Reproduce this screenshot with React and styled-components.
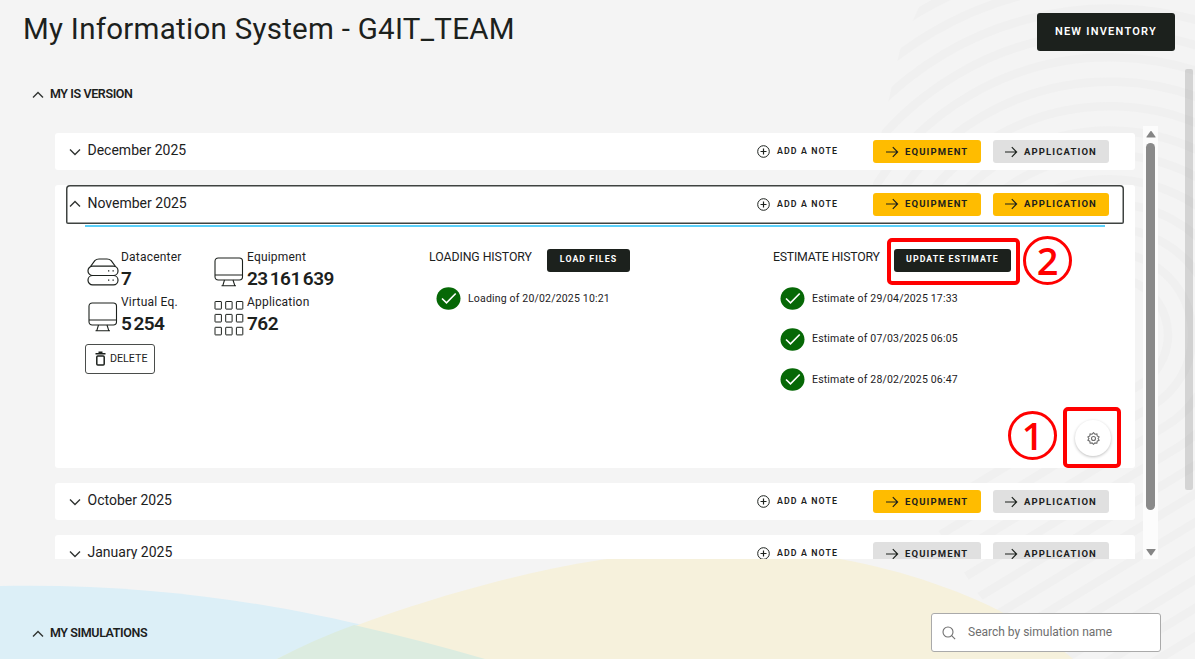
import React from "react";
import styled, { createGlobalStyle, css } from "styled-components";

const INK = "#1c211d";
const YELLOW = "#ffbc00";

const GlobalStyle = createGlobalStyle`
  * { box-sizing: border-box; }
  body { margin: 0; background: #f4f4f4; font-family: Roboto, "Open Sans", sans-serif; color: ${INK}; }
  button, input { font-family: inherit; color: inherit; }
`;

const Page = styled.div`
  position: relative;
  width: 1195px;
  height: 659px;
  overflow: hidden;
  isolation: isolate;
`;

const Backdrop = styled.svg`
  position: absolute;
  inset: 0;
  z-index: -1;
`;

const Header = styled.header`
  display: flex;
  justify-content: space-between;
  height: 69px;
  padding: 13px 20px 0 23px;
`;

const Title = styled.h1`
  margin: 0;
  font-size: 29.5px;
  line-height: 33px;
  font-weight: 400;
  letter-spacing: 0.27px;
  white-space: nowrap;
`;

const DarkButton = styled.button`
  display: flex;
  align-items: center;
  justify-content: center;
  flex: none;
  border: 0;
  padding: 0 0 ${(p) => (p.$large ? 2 : 1.5)}px;
  border-radius: 3px;
  background: ${INK};
  color: #fff;
  font-weight: ${(p) => (p.$large ? 600 : 700)};
  white-space: nowrap;
  width: ${(p) => p.$width}px;
  height: ${(p) => (p.$large ? 38 : 23)}px;
  font-size: ${(p) => (p.$large ? 11 : 8.8)}px;
  letter-spacing: ${(p) => (p.$large ? 1.25 : 1.05)}px;
`;

const Body = styled.div`
  display: flex;
  justify-content: space-between;
  height: 421px;
`;

const Sections = styled.main`
  width: 1160px;
`;

const PageScroll = styled.div`
  width: 8px;
  height: 421px;
  margin-right: 2px;
  border-radius: 2px;
  background: rgba(0, 0, 0, 0.13);
`;

const SectionToggle = styled.div`
  display: flex;
  align-items: center;
  gap: 6px;
  height: 20px;
  margin: ${(p) => p.$top}px 0 0 32px;
  font-size: 12.5px;
  font-weight: 600;
  letter-spacing: -0.4px;
  white-space: nowrap;
  svg { margin-top: 3px; }
`;

const ListFrame = styled.div`
  display: flex;
  justify-content: space-between;
  height: 433px;
  margin: 23px 2px 0 55px;
  overflow: hidden;
`;

const List = styled.div`
  display: flex;
  flex-direction: column;
  gap: 15px;
  width: 1080px;
  padding-top: 7px;
`;

const Panel = styled.section`
  flex: none;
  height: ${(p) => (p.$open ? 283 : 37)}px;
  padding: 0 11px;
  border-radius: 3px;
  background: #fff;
`;

const PanelHeader = styled.div`
  display: flex;
  align-items: center;
  height: ${(p) => (p.$open ? 38.5 : 37)}px;
  padding: 0 15px 0 3px;
  border-radius: 4px 4px 2px 2px;
  ${(p) => p.$open && css`box-shadow: inset 0 0 0 1.5px #3f4341;`}
`;

const Month = styled.span`
  flex: 1;
  margin: -3px 0 0 6.5px;
  font-size: 14px;
  letter-spacing: 0;
`;

const AddNote = styled.button`
  display: flex;
  align-items: center;
  gap: 7px;
  width: 81px;
  margin-right: 35px;
  padding: 0;
  border: 0;
  background: none;
  font-size: 8.8px;
  font-weight: 600;
  letter-spacing: 1.1px;
  white-space: nowrap;
  svg { flex: none; }
  span { margin-top: -1px; }
`;

const LinkButton = styled.button`
  display: flex;
  align-items: center;
  gap: 6px;
  width: ${(p) => p.$width}px;
  height: 22.5px;
  margin-left: ${(p) => p.$gap || 0}px;
  padding: 0 0 0 ${(p) => p.$pad}px;
  border: 0;
  border-radius: 3px;
  background: ${(p) => (p.$active ? YELLOW : "#e0e0e0")};
  font-size: 9.5px;
  font-weight: 700;
  letter-spacing: 1.13px;
  white-space: nowrap;
  svg { flex: none; }
  span { margin-top: -1px; }
`;

const Details = styled.div`
  display: grid;
  grid-template-columns: 344px 344px 1fr;
  height: 243px;
  margin: 1.5px 19px 0;
  border-top: 2px solid #5ad0fa;
`;

const Inventory = styled.div`
  padding-top: 22px;
`;

const Stats = styled.div`
  display: grid;
  grid-template-columns: 126px 1fr;
  grid-auto-rows: 45px;
`;

const Stat = styled.div`
  display: flex;
  gap: 2px;
  svg { flex: none; margin: 7px 0 0 2px; }
`;

const StatText = styled.div`
  display: flex;
  flex-direction: column;
  white-space: nowrap;
  font-size: 12px;
  line-height: 16px;
  letter-spacing: 0.2px;
`;

const Figure = styled.strong`
  margin-top: 3px;
  font-size: 19px;
  line-height: 22px;
  font-weight: 600;
  letter-spacing: -0.5px;
  word-spacing: -2.2px;
`;

const DeleteButton = styled.button`
  display: flex;
  align-items: center;
  gap: 4px;
  width: 70px;
  height: 30px;
  margin-top: 5px;
  padding: 0 0 1px 9px;
  border: 1.5px solid #4a4d4b;
  border-radius: 3px;
  background: #fff;
  font-size: 10.7px;
`;

const History = styled.div`
  padding-top: 21.5px;
`;

const HistoryHead = styled.div`
  display: flex;
  height: 24px;
  font-size: 12.3px;
  line-height: 17px;
  white-space: nowrap;
`;

const HistoryTitle = styled.span`
  width: ${(p) => p.$width}px;
  letter-spacing: ${(p) => p.$tracking}px;
`;

const Entries = styled.ul`
  display: flex;
  flex-direction: column;
  gap: 17.5px;
  margin: 14.5px 0 0 6.5px;
  padding: 0;
  list-style: none;
`;

const Entry = styled.li`
  display: flex;
  align-items: center;
  gap: 7.5px;
  height: 23px;
  font-size: 10.5px;
  letter-spacing: 0.18px;
  white-space: nowrap;
  span { margin-top: -1px; }
`;

const InnerScroll = styled.div`
  display: flex;
  flex-direction: column;
  align-items: center;
  justify-content: space-between;
  width: 15px;
  padding: 4px 0 3px;
  background: #fcfcfc;
`;

const Thumb = styled.div`
  width: 9px;
  height: 367px;
  margin: 5px 0 auto;
  border-radius: 5px;
  background: #8a8a8a;
`;

const Footer = styled.div`
  display: flex;
  justify-content: space-between;
  margin-top: 123px;
  padding-right: 34px;
`;

const Search = styled.label`
  display: flex;
  align-items: center;
  gap: 12px;
  width: 230px;
  height: 39px;
  padding: 0 10px;
  border: 1.5px solid #aaa;
  border-radius: 3px;
  background: #fff;
`;

const SearchInput = styled.input`
  flex: 1;
  min-width: 0;
  padding: 0 0 1px;
  border: 0;
  outline: 0;
  background: none;
  font-size: 12px;
  letter-spacing: 0;
  &::placeholder { color: #6e6e6e; opacity: 1; }
`;

const SettingsButton = styled.button`
  position: absolute;
  left: 1075px;
  top: 420px;
  display: grid;
  place-items: center;
  width: 36px;
  height: 36px;
  padding: 0;
  border: 0;
  border-radius: 50%;
  background: #fff;
  box-shadow: 0 1px 3px rgba(0, 0, 0, 0.25);
`;

const Highlight = styled.div`
  position: absolute;
  left: ${(p) => p.$x}px;
  top: ${(p) => p.$y}px;
  width: ${(p) => p.$w}px;
  height: ${(p) => p.$h}px;
  border: 4px solid #f00;
  border-radius: 5px;
`;

const Step = styled.div`
  position: absolute;
  left: ${(p) => p.$x}px;
  top: ${(p) => p.$y}px;
  display: grid;
  place-items: center;
  width: 49px;
  height: 49px;
  border: 3px solid #f00;
  border-radius: 50%;
  color: #f00;
  font: 600 38px/43px "Open Sans", "Noto Sans", sans-serif;
`;

const Chevron = ({ up }) => (
  <svg width="12" height="8" viewBox="0 0 12 8" fill="none" stroke="#303432" strokeWidth="1.4">
    <path d={up ? "M1 6.5 6 1.5 11 6.5" : "M1 1.5 6 6.5 11 1.5"} />
  </svg>
);

const PlusCircle = () => (
  <svg width="13" height="13" viewBox="0 0 13 13" fill="none" stroke={INK} strokeWidth="1">
    <circle cx="6.5" cy="6.5" r="5.8" />
    <path d="M6.5 3.5v6M3.5 6.5h6" strokeWidth="1.2" />
  </svg>
);

const Arrow = () => (
  <svg width="14" height="12" viewBox="0 0 14 12" fill="none" stroke={INK} strokeWidth="1.2">
    <path d="M1 6h11.5M7.8 1.2 12.6 6 7.8 10.8" />
  </svg>
);

const Check = () => (
  <svg width="25" height="23" viewBox="0 0 25 23" fill="none">
    <ellipse cx="12.5" cy="11.5" rx="12" ry="11.3" fill="#066806" />
    <path d="m6 11.5 4.5 4.3L19.7 6.5" stroke="#fff" strokeWidth="1.6" />
  </svg>
);

const DatacenterIcon = () => (
  <svg width="32" height="30" viewBox="0 0 32 30" fill="none" stroke={INK} strokeWidth="1.2">
    <path d="M3.5 10.5 7.8 4.6Q9.5 3 12 3h8q2.5 0 4.2 1.6L28.5 10.5" />
    <rect x="1" y="10.2" width="30" height="9.3" rx="4.6" />
    <rect x="1" y="19.5" width="30" height="9.3" rx="4.6" />
    <path d="M21 14.8h1.3M25.5 14.8h1.3M21 24.2h1.3M25.5 24.2h1.3" />
  </svg>
);

const MonitorIcon = () => (
  <svg width="32" height="32" viewBox="0 0 32 32" fill="none" stroke={INK} strokeWidth="1.1">
    <rect x="2" y="2" width="27.5" height="22" rx="3.2" />
    <path d="M2 19h27.5M11.5 24 9.8 29.6M20 24l1.8 5.6M8.5 29.8h14.5" />
  </svg>
);

const GridIcon = () => (
  <svg width="32" height="36" viewBox="0 0 32 36" fill="none" stroke={INK} strokeWidth="1">
    {[0, 1, 2].map((r) =>
      [0, 1, 2].map((c) => (
        <rect key={`${r}${c}`} x={2 + c * 10.7} y={0.5 + r * 12.9} width="6.4" height="7.6" rx="0.4" />
      ))
    )}
  </svg>
);

const TrashIcon = () => (
  <svg width="11" height="15" viewBox="0 0 11 15" fill="none" stroke={INK} strokeWidth="1.5">
    <path d="M.5 2.7h10M3.5 1.2h4" />
    <rect x="1.8" y="5" width="7.4" height="9" rx="1" />
  </svg>
);

const GearIcon = () => (
  <svg width="13" height="13" viewBox="0 0 13 13" fill="none" stroke="#6d6d6d" strokeWidth="1.1">
    <path d="m6.5.7 1.4 1.5 2-.3.3 2 1.9 1-1 1.6 1 1.7-1.900 1-.3 2-2-.3-1.400 1.400-1.400-1.400-2 .3-.3-2-1.900-1 1-1.700-1-1.600 1.900-1 .3-2 2 .3z" />
    <circle cx="6.5" cy="6.5" r="2" />
  </svg>
);

const SearchIcon = () => (
  <svg width="14" height="14" viewBox="0 0 14 14" fill="none" stroke="#707070" strokeWidth="1.1">
    <circle cx="6" cy="6" r="5" />
    <path d="m9.7 9.7 3.4 3.4" />
  </svg>
);

const ScrollArrow = ({ down }) => (
  <svg width="10" height="8" viewBox="0 0 10 8" fill="#858585">
    <path d={down ? "M.8 1h8.4q.8 0 .3.8L5.6 7.2q-.6.6-1.2 0L.5 1.8Q0 1 .8 1z" : "M.8 7.5h8.4q.8 0 .3-.8L5.6 1.3q-.6-.6-1.2 0L.5 6.7q-.5.8.3.8z"} />
  </svg>
);

const rings = Array.from({ length: 23 }, (_, i) => 58 + i * 24.4);

const Waves = () => (
  <Backdrop width="1195" height="659">
    <defs>
      <clipPath id="fan">
        <path d="M922 0 900 50 882 130 872 190 872 400 905 470 935 525 975 590 1030 659H1195V0Z" />
      </clipPath>
    </defs>
    <g clipPath="url(#fan)" fill="none" stroke="#f0f0f0" strokeWidth="8.5">
      {rings.map((r) => {
        const ex = 1110 + r * 0.52;
        const ey = 335 + r * 0.854;
        return <path key={r} d={`M${1110 - r} 335A${r} ${r} 0 1 1 ${ex} ${ey}l-427 260`} />;
      })}
    </g>
    <path d="M0 586C200 582 360 620 485 659H0Z" fill="#dceff7" />
    <path d="M277 659C330 632 470 580 600 560C690 547 780 549 840 559C930 575 1020 612 1073 659Z" fill="#f6f1dc" />
    <path d="M277 659Q315 639 354 625Q420 640 485 659Z" fill="#dcece0" />
  </Backdrop>
);

const Row = ({ month, open, equipment, application, children }) => (
  <Panel $open={open}>
    <PanelHeader $open={open}>
      <Chevron up={open} />
      <Month>{month}</Month>
      <AddNote><PlusCircle /><span>ADD A NOTE</span></AddNote>
      <LinkButton $width={108} $pad={12} $active={equipment}><Arrow /><span>EQUIPMENT</span></LinkButton>
      <LinkButton $width={116} $pad={11} $gap={12} $active={application}><Arrow /><span>APPLICATION</span></LinkButton>
    </PanelHeader>
    {children}
  </Panel>
);

const StatItem = ({ icon, label, value }) => (
  <Stat>
    {icon}
    <StatText>{label}<Figure>{value}</Figure></StatText>
  </Stat>
);

const HistoryColumn = ({ title, titleWidth, tracking, action, actionWidth, entries }) => (
  <History>
    <HistoryHead>
      <HistoryTitle $width={titleWidth} $tracking={tracking}>{title}</HistoryTitle>
      <DarkButton $width={actionWidth}>{action}</DarkButton>
    </HistoryHead>
    <Entries>
      {entries.map((e) => (
        <Entry key={e}><Check /><span>{e}</span></Entry>
      ))}
    </Entries>
  </History>
);

export default function App() {
  return (
    <Page>
      <GlobalStyle />
      <Waves />
      <Header>
        <Title>My Information System - G4IT_TEAM</Title>
        <DarkButton $large $width={138}>NEW INVENTORY</DarkButton>
      </Header>
      <Body>
        <Sections>
          <SectionToggle $top={14}><Chevron up />MY IS VERSION</SectionToggle>
          <ListFrame>
            <List>
              <Row month="December 2025" equipment />
              <Row month="November 2025" open equipment application>
                <Details>
                  <Inventory>
                    <Stats>
                      <StatItem icon={<DatacenterIcon />} label="Datacenter" value="7" />
                      <StatItem icon={<MonitorIcon />} label="Equipment" value="23 161 639" />
                      <StatItem icon={<MonitorIcon />} label="Virtual Eq." value="5 254" />
                      <StatItem icon={<GridIcon />} label="Application" value="762" />
                    </Stats>
                    <DeleteButton><TrashIcon />DELETE</DeleteButton>
                  </Inventory>
                  <HistoryColumn
                    title="LOADING HISTORY"
                    titleWidth={118}
                    tracking={-0.07}
                    action="LOAD FILES"
                    actionWidth={83}
                    entries={["Loading of 20/02/2025 10:21"]}
                  />
                  <HistoryColumn
                    title="ESTIMATE HISTORY"
                    titleWidth={121}
                    tracking={-0.22}
                    action="UPDATE ESTIMATE"
                    actionWidth={117}
                    entries={["Estimate of 29/04/2025 17:33", "Estimate of 07/03/2025 06:05", "Estimate of 28/02/2025 06:47"]}
                  />
                </Details>
              </Row>
              <Row month="October 2025" equipment />
              <Row month="January 2025" />
            </List>
            <InnerScroll><ScrollArrow /><Thumb /><ScrollArrow down /></InnerScroll>
          </ListFrame>
        </Sections>
        <PageScroll />
      </Body>
      <Footer>
        <SectionToggle $top={9}><Chevron up />MY SIMULATIONS</SectionToggle>
        <Search><SearchIcon /><SearchInput placeholder="Search by simulation name" /></Search>
      </Footer>
      <SettingsButton><GearIcon /></SettingsButton>
      <Highlight $x={887} $y={238} $w={133} $h={47} />
      <Highlight $x={1063} $y={407} $w={58} $h={61} />
      <Step $x={1023} $y={236}>2</Step>
      <Step $x={1008} $y={411}>1</Step>
    </Page>
  );
}
